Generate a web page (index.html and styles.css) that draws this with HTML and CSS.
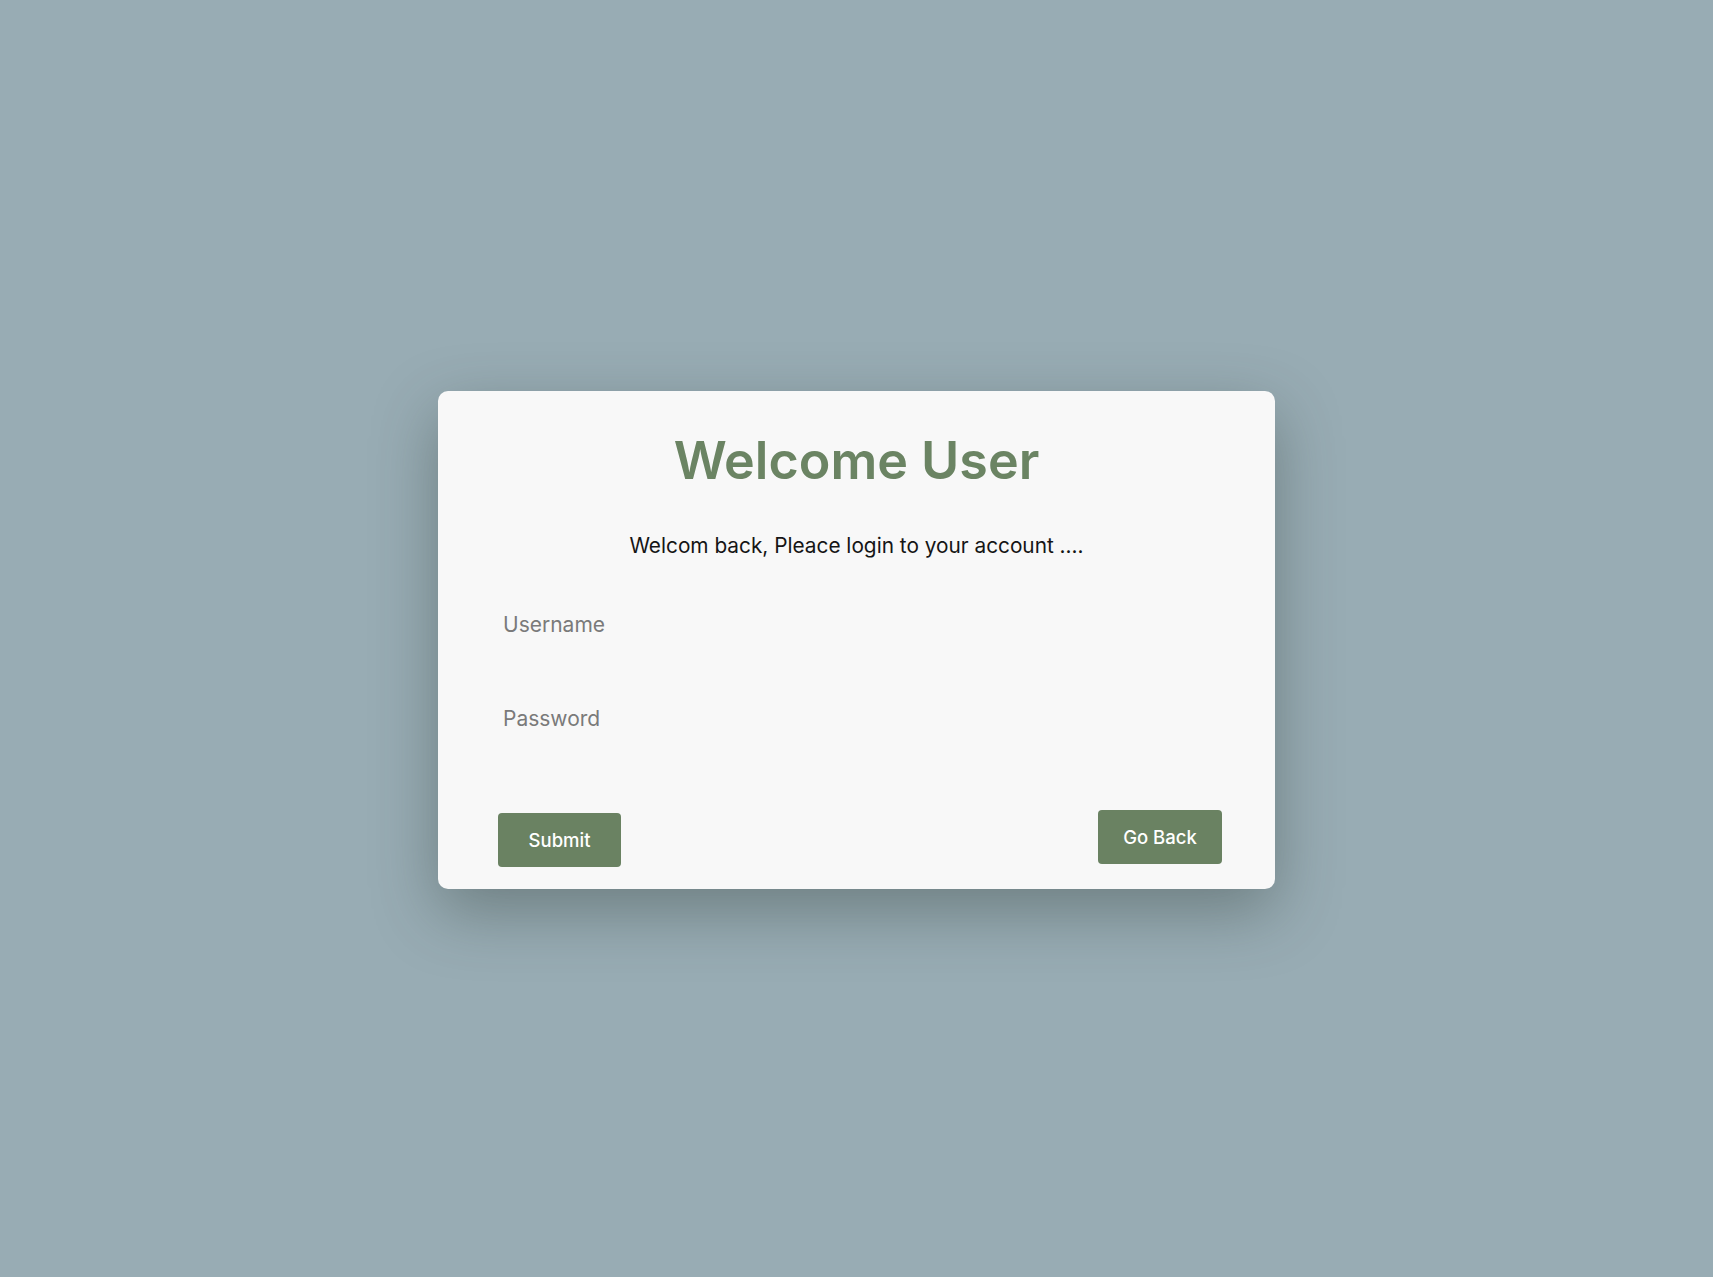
FILE: index.html
```html
<!DOCTYPE html>
<html lang="en">
<head>
<meta charset="utf-8">
<title>Welcome User</title>
<link rel="stylesheet" href="styles.css">
</head>
<body>
  <main class="page">
    <section class="card">
      <h1 class="title">Welcome User</h1>
      <p class="subtitle">Welcom back, Pleace login to your account ....</p>
      <form class="form">
        <input class="field" type="text" placeholder="Username">
        <input class="field" type="password" placeholder="Password">
        <div class="actions">
          <button class="btn btn-submit" type="button">Submit</button>
          <button class="btn btn-back" type="button">Go Back</button>
        </div>
      </form>
    </section>
  </main>
</body>
</html>
```

FILE: styles.css
```css
* { box-sizing: border-box; }

html, body {
  margin: 0;
  padding: 0;
}

body {
  background: #98acb4;
  font-family: "Inter", "Noto Sans", sans-serif;
}

.page {
  min-height: 1277px;
  padding-top: 2px;
  display: flex;
  align-items: center;
  justify-content: center;
}

.card {
  width: 837px;
  height: 498px;
  background: #f8f8f8;
  border-radius: 10px;
  box-shadow: 0 22px 64px rgba(45, 58, 52, 0.4);
  padding: 38px 53px 22px 60px;
  display: flex;
  flex-direction: column;
}

.title {
  margin: 0;
  text-align: center;
  font-size: 52px;
  line-height: 64px;
  font-weight: 600;
  color: #6b8463;
  letter-spacing: 0;
  margin-left: -7px;
}

.subtitle {
  margin: 40px 0 0 -7px;
  text-align: center;
  font-size: 20.8px;
  line-height: 26px;
  color: #151515;
}

.form {
  display: flex;
  flex-direction: column;
  flex: 1;
  margin-top: 52px;
}

.field {
  display: block;
  width: 100%;
  border: none;
  outline: none;
  background: transparent;
  padding: 0 5px;
  height: 28px;
  font-family: inherit;
  font-size: 21px;
  color: #333;
  margin-bottom: 66px;
}

.field::placeholder {
  color: #7a7a7a;
}

.actions {
  margin-top: auto;
  display: flex;
  justify-content: space-between;
  align-items: flex-end;
}

.btn {
  border: none;
  background: #6a8262;
  color: #ffffff;
  font-family: inherit;
  font-size: 18.5px;
  font-weight: 500;
  height: 54px;
  border-radius: 4px;
  padding: 0;
  cursor: pointer;
}

.btn-submit {
  width: 123px;
}

.btn-back {
  width: 124px;
  margin-bottom: 3px;
}
```
